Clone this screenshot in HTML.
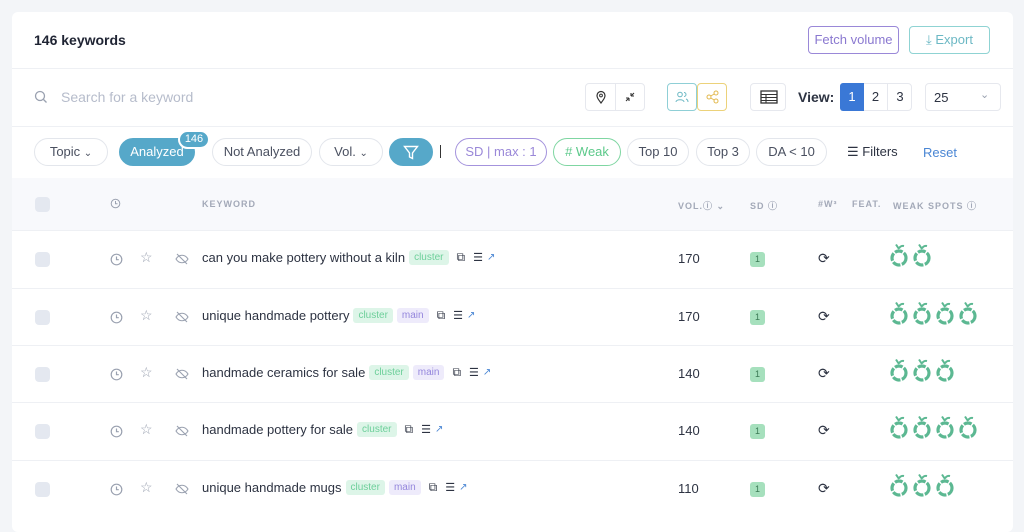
<!DOCTYPE html>
<html><head><meta charset="utf-8"><style>
*{box-sizing:border-box;margin:0;padding:0}
body{width:1024px;height:517px;overflow:hidden;background:#f3f5f8;font-family:"Liberation Sans",sans-serif;color:#2d3342;position:relative}
.card{position:absolute;left:12px;top:12px;width:1001px;height:520px;background:#fff;border-radius:6px;}
.abs{position:absolute}
.hr{position:absolute;left:0;right:0;height:1px;background:#eef0f4}
.pill{position:absolute;top:138px;height:28px;border:1px solid #e3e6ec;border-radius:14px;font-size:13px;line-height:26px;text-align:center;color:#4a5060}
.btn{position:absolute;height:28px;border:1px solid;border-radius:4px;font-size:13px;line-height:26px;text-align:center}
.box{position:absolute;top:83px;height:28px;border:1px solid #e6e8ee;border-radius:4px}
.th{position:absolute;top:199px;font-size:9px;letter-spacing:1px;color:#a3a9b8;font-weight:bold}
.row{position:absolute;left:12px;width:1001px;height:57px;border-top:1px solid #eef0f4}
.cb{position:absolute;left:23px;width:15px;height:15px;border-radius:4px;background:#e4e8f0}
.kw{position:absolute;left:202px;font-size:13px;color:#2d3342;white-space:nowrap;display:flex;align-items:center;gap:4px}
.tg{font-size:10px;padding:2px 5px;border-radius:3px}
.cl{background:#ddf5e8;color:#6dcf9a}.mn{background:#eeebfb;color:#9486dc}
.vol{position:absolute;left:666px;font-size:13px}
.sd{position:absolute;left:738px;width:15px;height:15px;background:#a6e0bd;border-radius:3px;font-size:9px;line-height:15px;text-align:center;color:#3b7a55}
.ap{display:inline-block;margin-right:3px}
</style></head><body>
<div class="card">
<div class="abs" style="left:22px;top:20px;font-size:14px;font-weight:bold;color:#1f2433">146 keywords</div>
<div class="btn" style="left:796px;top:14px;width:91px;border-color:#9a88d8;color:#8a78d0">Fetch volume</div>
<div class="btn" style="left:897px;top:14px;width:81px;border-color:#8fd3d3;color:#6cb8c4">⤓ Export</div>
<div class="hr" style="top:56px"></div>
<svg class="abs" style="left:22px;top:78px" width="14" height="14"><circle cx="6" cy="6" r="4.5" fill="none" stroke="#9aa1b0" stroke-width="1.3"/><path d="M9.5 9.5L12.5 12.5" stroke="#9aa1b0" stroke-width="1.3"/></svg>
<div class="abs" style="left:49px;top:77px;font-size:14px;color:#b6bccb">Search for a keyword</div>
<div class="box" style="left:573px;top:71px;width:60px"><div class="abs" style="left:29px;top:0;width:1px;height:26px;background:#e6e8ee"></div>
<svg class="abs" style="left:8px;top:6px" width="14" height="14"><path d="M7 13C4 9 3 7.5 3 5.5a4 4 0 018 0c0 2-1 3.5-4 7.5z" fill="none" stroke="#333" stroke-width="1.2"/><circle cx="7" cy="5.5" r="1.4" fill="none" stroke="#333"/></svg>
<svg class="abs" style="left:38px;top:7px" width="12" height="12"><path d="M2 10L5 7M5 7v3M5 7H2M10 2L7 5M7 5V2M7 5h3" fill="none" stroke="#333" stroke-width="1.1"/></svg></div>
<div class="box" style="left:655px;top:71px;width:30px;border-color:#8fcfd6"><svg class="abs" style="left:7px;top:7px" width="14" height="12"><circle cx="5" cy="3.5" r="2.3" fill="none" stroke="#6cb8c4"/><path d="M1 11c0-3 8-3 8 0M9 1.5a2 2 0 010 4M11 8c1.5.5 2 1.5 2 3" fill="none" stroke="#6cb8c4"/></svg></div>
<div class="box" style="left:685px;top:71px;width:30px;border-color:#ecd27a"><svg class="abs" style="left:8px;top:6px" width="13" height="14"><circle cx="3" cy="7" r="2" fill="none" stroke="#e2b84c"/><circle cx="10" cy="3" r="2" fill="none" stroke="#e2b84c"/><circle cx="10" cy="11" r="2" fill="none" stroke="#e2b84c"/><path d="M4.7 6L8.3 4M4.7 8L8.3 10" stroke="#e2b84c"/></svg></div>
<div class="box" style="left:738px;top:71px;width:36px"><svg class="abs" style="left:9px;top:6px" width="18" height="14"><rect x="1" y="1" width="16" height="12" fill="none" stroke="#333" stroke-width="1.3"/><path d="M1 4.5h16M1 7.5h16M1 10.5h16M6 4.5v8.5" stroke="#333" stroke-width="1.1"/></svg></div>
<div class="abs" style="left:786px;top:77px;font-size:14px;font-weight:bold;color:#2d3342">View:</div>
<div class="box" style="left:828px;top:71px;width:72px"></div>
<div class="abs" style="left:828px;top:71px;width:24px;height:28px;background:#3a78d6;border-radius:3px 0 0 3px;color:#fff;font-size:13px;line-height:28px;text-align:center">1</div>
<div class="abs" style="left:852px;top:71px;width:24px;height:28px;border-right:1px solid #e6e8ee;font-size:13px;line-height:28px;text-align:center">2</div>
<div class="abs" style="left:876px;top:71px;width:24px;height:28px;font-size:13px;line-height:28px;text-align:center">3</div>
<div class="box" style="left:913px;top:71px;width:76px"><span class="abs" style="left:8px;top:6px;font-size:13px">25</span><span class="abs" style="left:54px;top:4px;font-size:11px;color:#9aa1b0">⌄</span></div>
<div class="hr" style="top:114px"></div>
</div>
<div class="pill" style="left:34px;width:74px">Topic <span style="font-size:10px">⌄</span></div>
<div class="pill" style="left:119px;width:76px;background:#56a8c9;border-color:#56a8c9;color:#fff">Analyzed</div>
<div class="abs" style="left:178px;top:130px;width:32px;height:19px;border-radius:10px;background:#56a8c9;border:2px solid #fff;color:#fff;font-size:11px;line-height:15px;text-align:center">146</div>
<div class="pill" style="left:212px;width:100px">Not Analyzed</div>
<div class="pill" style="left:319px;width:64px">Vol. <span style="font-size:10px">⌄</span></div>
<div class="pill" style="left:389px;width:44px;background:#56a8c9;border-color:#56a8c9"><svg style="margin-top:6px" width="16" height="15"><path d="M1.5 1.5h13L9.5 8v5.5l-3-1.5V8z" fill="none" stroke="#fff" stroke-width="1.4"/></svg></div>
<div class="abs" style="left:440px;top:145px;width:1px;height:13px;background:#333"></div>
<div class="pill" style="left:455px;width:92px;border-color:#a493dd;color:#9a88d8">SD | max : 1</div>
<div class="pill" style="left:553px;width:68px;border-color:#7fd6a2;color:#5cc98a"># Weak</div>
<div class="pill" style="left:627px;width:62px">Top 10</div>
<div class="pill" style="left:696px;width:54px">Top 3</div>
<div class="pill" style="left:756px;width:71px">DA &lt; 10</div>
<div class="abs" style="left:847px;top:144px;font-size:13px;color:#2d3342">☰ Filters</div>
<div class="abs" style="left:923px;top:145px;font-size:13px;color:#4a86d4">Reset</div>
<div class="abs" style="left:12px;top:178px;width:1001px;height:52px;background:#f8f9fc"></div>
<div class="cb" style="left:35px;top:197px"></div>
<svg class="abs" style="left:110px;top:198px" width="11" height="11"><circle cx="5.5" cy="5.5" r="4.3" fill="none" stroke="#9aa1b0"/><path d="M5.5 3v2.7h2" fill="none" stroke="#9aa1b0"/></svg>
<div class="th" style="left:202px">KEYWORD</div>
<div class="th" style="left:678px">VOL.ⓘ ⌄</div>
<div class="th" style="left:750px">SD ⓘ</div>
<div class="th" style="left:818px">#W³</div>
<div class="th" style="left:852px">FEAT.</div>
<div class="th" style="left:893px">WEAK SPOTS ⓘ</div>

<div id="rows"></div>
<script>
var d=[["can you make pottery without a kiln",0,"170",2],["unique handmade pottery",1,"170",4],["handmade ceramics for sale",1,"140",3],["handmade pottery for sale",0,"140",4],["unique handmade mugs",1,"110",3]];
var tops=[230,288,345,402,460],h="";
var ap='<svg class="ap" width="20" height="24" viewBox="0 0 20 24"><path d="M10 6L7 1.5M10 5.5c1-2 3-3 5-2.5" fill="none" stroke="#5cb892" stroke-width="2"/><circle cx="10" cy="15" r="7" fill="none" stroke="#5cb892" stroke-width="3.2" stroke-dasharray="8 1.5"/></svg>';
d.forEach(function(r,i){var t=tops[i],c=t+29;
h+='<div class="row" style="top:'+t+'px"></div>';
h+='<div class="cb" style="left:35px;top:'+(c-7)+'px"></div>';
h+='<svg class="abs" style="left:110px;top:'+(c-6)+'px" width="13" height="13"><circle cx="6.5" cy="6.5" r="5.3" fill="none" stroke="#9aa1b0" stroke-width="1.2"/><path d="M6.5 3.5v3.2h2.3" fill="none" stroke="#9aa1b0" stroke-width="1.2"/></svg>';
h+='<div class="abs" style="left:140px;top:'+(c-10)+'px;font-size:14px;color:#9aa1b0">☆</div>';
h+='<svg class="abs" style="left:175px;top:'+(c-6)+'px" width="14" height="12"><path d="M1 6c3-5 9-5 12 0c-3 5-9 5-12 0zM2 1l10 10" fill="none" stroke="#9aa1b0" stroke-width="1.1"/></svg>';
h+='<div class="kw" style="top:'+(c-9)+'px">'+r[0]+' <span class="tg cl">cluster</span>'+(r[1]?'<span class="tg mn">main</span>':'')+'<span style="font-size:12px;margin-left:4px">⧉</span><span style="font-size:11px;margin-left:4px">☰</span><span style="font-size:10px;color:#4a86d4">↗</span></div>';
h+='<div class="vol" style="top:'+(c-8)+'px;left:678px">'+r[2]+'</div>';
h+='<div class="sd" style="left:750px;top:'+(c-7)+'px">1</div>';
h+='<div class="abs" style="left:818px;top:'+(c-9)+'px;font-size:14px">⟳</div>';
h+='<div class="abs" style="left:889px;top:'+(c-16)+'px">'+ap.repeat(r[3])+'</div>';});
document.getElementById('rows').innerHTML=h;
</script>
</body></html>
